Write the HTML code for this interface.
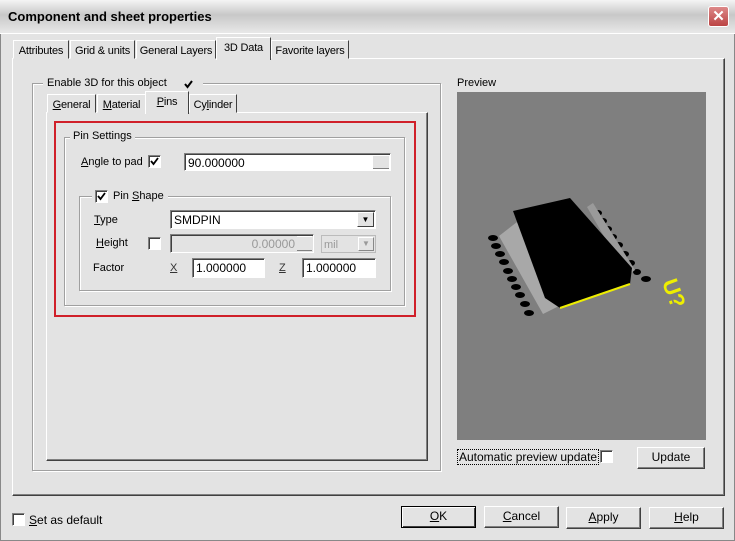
<!DOCTYPE html>
<html><head><style>
*{box-sizing:border-box}
body{margin:0;width:735px;height:541px;overflow:hidden;background:#e3e3e3;font-family:"Liberation Sans",Arial,sans-serif;font-size:11px;color:#000;position:relative}
.a{position:absolute}
.t{position:absolute;white-space:nowrap}
.sunk{border:1px solid;border-color:#808080 #fff #fff #808080;box-shadow:inset 1px 1px 0 #404040}
.grp{position:absolute;border:1px solid #a0a0a0;box-shadow:1px 1px 0 #fff,inset 1px 1px 0 #fff}
.tab{position:absolute;height:19px;border:1px solid;border-color:#fff #404040 transparent #fff;padding:4px 0 0 0;text-align:center;background:#e3e3e3;white-space:nowrap;letter-spacing:-0.2px}
.btn{position:absolute;height:22px;background:#e3e3e3;border:1px solid;border-color:#fff #404040 #404040 #fff;box-shadow:inset -1px -1px 0 #808080;text-align:center;line-height:19px;font-size:12px}
.cb{position:absolute;width:13px;height:13px;background:#fff;border:1px solid;border-color:#808080 #fff #fff #808080;box-shadow:inset 1px 1px 0 #404040}
.cb svg{position:absolute;left:1px;top:1px}
.in{position:absolute;background:#fff;padding:2px 0 0 3px;font-size:12px}
u{text-decoration:underline}
</style></head><body>
<div class="a" style="left:0;top:0;width:735px;height:34px;background:linear-gradient(#f4f4f4,#c8c8c8 45%,#e8e8e8);border-bottom:1px solid #fff"></div>
<div class="t" style="left:8px;top:9px;font-weight:bold;font-size:13px">Component and sheet properties</div>
<div class="a" style="left:708px;top:6px;width:21px;height:21px;background:linear-gradient(#d88,#b44);border:1px solid #fff;border-radius:3px;color:#fff;text-align:center;font-size:15px;line-height:19px;font-weight:bold">✕</div>
<div class="a" style="left:0;top:34px;width:735px;height:507px;border:1px solid #888;border-top:none"></div>

<div class="a" style="left:12px;top:58px;width:713px;height:438px;border:1px solid;border-color:#fff #404040 #404040 #fff;box-shadow:inset -1px -1px 0 #808080"></div>
<div class="tab" style="left:13px;top:40px;width:56px">Attributes</div>
<div class="tab" style="left:70px;top:40px;width:65px">Grid &amp; units</div>
<div class="tab" style="left:136px;top:40px;width:80px">General Layers</div>
<div class="tab" style="left:216px;top:37px;width:55px;height:23px;border-bottom:none;z-index:2">3D Data</div>
<div class="tab" style="left:271px;top:40px;width:78px">Favorite layers</div>

<div class="grp" style="left:32px;top:83px;width:409px;height:388px"></div>
<div class="t" style="left:43px;top:77px;background:#e3e3e3;padding:0 4px;width:160px">Enable 3D for this object</div>
<svg class="a" style="left:183px;top:79px" width="11" height="11"><path d="M2 5 L4.5 8 L9 2" stroke="#000" stroke-width="2" fill="none"/></svg>

<div class="a" style="left:46px;top:112px;width:382px;height:349px;border:1px solid;border-color:#fff #404040 #404040 #fff;box-shadow:inset -1px -1px 0 #808080"></div>
<div class="tab" style="left:47px;top:94px;width:49px"><u>G</u>eneral</div>
<div class="tab" style="left:97px;top:94px;width:49px"><u>M</u>aterial</div>
<div class="tab" style="left:145px;top:91px;width:44px;height:23px;border-bottom:none;z-index:2"><u>P</u>ins</div>
<div class="tab" style="left:189px;top:94px;width:48px">Cy<u>l</u>inder</div>

<div class="a" style="left:54px;top:121px;width:362px;height:196px;border:2px solid #d0202a"></div>
<div class="grp" style="left:64px;top:137px;width:341px;height:169px"></div>
<div class="t" style="left:70px;top:130px;background:#e3e3e3;padding:0 3px">Pin Settings</div>
<div class="t" style="left:81px;top:156px"><u>A</u>ngle to pad</div>
<div class="cb" style="left:148px;top:155px"><svg width="9" height="9"><path d="M1 4 L3.5 7 L8 1" stroke="#000" stroke-width="1.8" fill="none"/></svg></div>
<div class="in sunk" style="left:184px;top:153px;width:207px;height:18px">90.000000</div>
<div class="a" style="left:373px;top:155px;width:16px;height:14px;background:#e3e3e3;border-top:1px solid #fff;border-bottom:1px solid #808080"></div>

<div class="grp" style="left:79px;top:196px;width:312px;height:95px"></div>
<div class="t" style="left:92px;top:189px;background:#e3e3e3;padding:0 3px;width:76px;height:14px"></div>
<div class="cb" style="left:95px;top:190px"><svg width="9" height="9"><path d="M1 4 L3.5 7 L8 1" stroke="#000" stroke-width="1.8" fill="none"/></svg></div>
<div class="t" style="left:113px;top:190px">Pin <u>S</u>hape</div>
<div class="t" style="left:94px;top:214px"><u>T</u>ype</div>
<div class="in sunk" style="left:170px;top:210px;width:206px;height:19px">SMDPIN</div>
<div class="a" style="left:357px;top:212px;width:17px;height:15px;background:#e3e3e3;border:1px solid;border-color:#fff #404040 #404040 #fff;font-size:8px;text-align:center;line-height:13px">▼</div>
<div class="t" style="left:96px;top:237px"><u>H</u>eight</div>
<div class="cb" style="left:148px;top:237px"></div>
<div class="in sunk" style="left:170px;top:234px;width:144px;height:19px;background:#e3e3e3;color:#999;text-align:right;padding-right:18px">0.00000</div>
<div class="a" style="left:297px;top:236px;width:15px;height:15px;background:#e3e3e3;border-top:1px solid #fff;border-bottom:1px solid #808080"></div>
<div class="t" style="left:321px;top:235px;width:55px;height:18px;border:1px solid #bbb;color:#999;padding:3px 2px">mil</div>
<div class="a" style="left:358px;top:237px;width:16px;height:14px;border:1px solid;border-color:#fff #888 #888 #fff;color:#999;font-size:8px;text-align:center;line-height:12px">▼</div>
<div class="t" style="left:93px;top:262px">Factor</div>
<div class="t" style="left:170px;top:262px;color:#333"><u>X</u></div>
<div class="in sunk" style="left:192px;top:258px;width:73px;height:20px">1.000000</div>
<div class="t" style="left:279px;top:262px;color:#333"><u>Z</u></div>
<div class="in sunk" style="left:302px;top:258px;width:74px;height:20px">1.000000</div>

<div class="t" style="left:457px;top:77px">Preview</div>
<div class="a" style="left:457px;top:92px;width:249px;height:348px;background:#7f7f7f"></div>
<svg class="a" style="left:457px;top:92px" width="249" height="348">
<g fill="#000">
<ellipse cx="36" cy="146" rx="5" ry="3"/><ellipse cx="39" cy="154" rx="5" ry="3"/><ellipse cx="43" cy="162" rx="5" ry="3"/><ellipse cx="47" cy="170" rx="5" ry="3"/><ellipse cx="51" cy="179" rx="5" ry="3"/><ellipse cx="55" cy="187" rx="5" ry="3"/><ellipse cx="59" cy="195" rx="5" ry="3"/><ellipse cx="63" cy="203" rx="5" ry="3"/><ellipse cx="68" cy="212" rx="5" ry="3"/><ellipse cx="72" cy="221" rx="5" ry="3"/>
<ellipse cx="141" cy="121" rx="4" ry="3"/><ellipse cx="146" cy="129" rx="4" ry="3"/><ellipse cx="151" cy="137" rx="4" ry="3"/><ellipse cx="156" cy="145" rx="4" ry="3"/><ellipse cx="162" cy="153" rx="4" ry="3"/><ellipse cx="168" cy="162" rx="4" ry="3"/><ellipse cx="174" cy="171" rx="4" ry="3"/><ellipse cx="180" cy="180" rx="4" ry="3"/><ellipse cx="189" cy="187" rx="5" ry="3"/>
</g>
<polygon points="42,144 60,130 102,214 86,222" fill="#a8a8a8"/>
<polygon points="130,115 136,111 178,178 170,184" fill="#9a9a9a"/>
<polygon points="56,119 113,106 175,176 173,192 103,216 88,206" fill="#000"/>
<line x1="103" y1="216" x2="173" y2="192" stroke="#ee0" stroke-width="2"/>
<text x="205" y="200" fill="#ee0" font-size="22" font-weight="bold" transform="rotate(70 212 195)">U?</text>
</svg>

<div class="t" style="left:457px;top:449px;font-size:12px;border:1px dotted #000;padding:0 1px">Automatic preview update</div>
<div class="cb" style="left:600px;top:450px"></div>
<div class="btn" style="left:637px;top:447px;width:68px">Update</div>

<div class="cb" style="left:12px;top:513px"></div>
<div class="t" style="left:29px;top:513px;font-size:12px"><u>S</u>et as default</div>
<div class="btn" style="left:401px;top:506px;width:75px;border-color:#000;box-shadow:inset 1px 1px 0 #fff,inset -1px -1px 0 #404040"><u>O</u>K</div>
<div class="btn" style="left:484px;top:506px;width:75px"><u>C</u>ancel</div>
<div class="btn" style="left:566px;top:507px;width:75px"><u>A</u>pply</div>
<div class="btn" style="left:649px;top:507px;width:75px"><u>H</u>elp</div>
</body></html>
